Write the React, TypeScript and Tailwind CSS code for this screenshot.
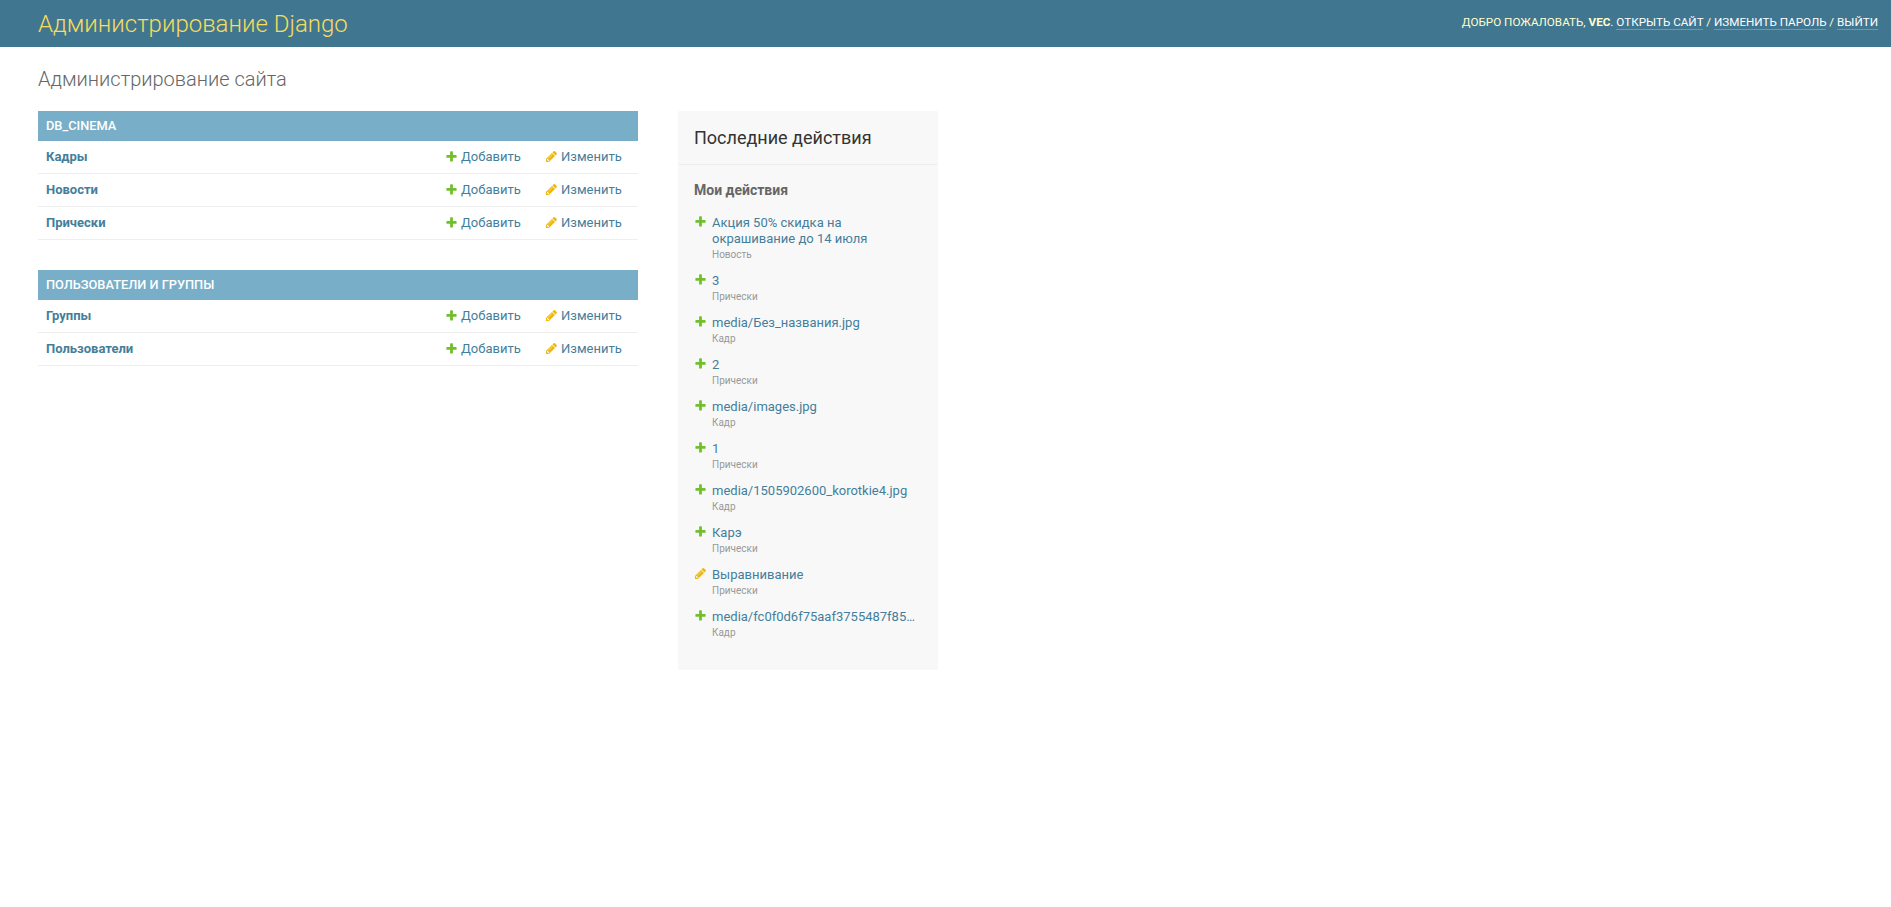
const models = [
  {
    caption: "DB_CINEMA",
    rows: ["Кадры", "Новости", "Прически"],
  },
  {
    caption: "ПОЛЬЗОВАТЕЛИ И ГРУППЫ",
    rows: ["Группы", "Пользователи"],
  },
];

const actions = [
  { title: "Акция 50% скидка на окрашивание до 14 июля", kind: "Новость", icon: "add" },
  { title: "3", kind: "Прически", icon: "add" },
  { title: "media/Без_названия.jpg", kind: "Кадр", icon: "add" },
  { title: "2", kind: "Прически", icon: "add" },
  { title: "media/images.jpg", kind: "Кадр", icon: "add" },
  { title: "1", kind: "Прически", icon: "add" },
  { title: "media/1505902600_korotkie4.jpg", kind: "Кадр", icon: "add" },
  { title: "Карэ", kind: "Прически", icon: "add" },
  { title: "Выравнивание", kind: "Прически", icon: "change" },
  { title: "media/fc0f0d6f75aaf3755487f85…", kind: "Кадр", icon: "add" },
];

function AddIcon() {
  return (
    <svg width="13" height="13" viewBox="0 0 1792 1792" className="shrink-0">
      <path
        fill="#70bf2b"
        d="M1600 796v192q0 40-28 68t-68 28h-416v416q0 40-28 68t-68 28h-192q-40 0-68-28t-28-68v-416h-416q-40 0-68-28t-28-68v-192q0-40 28-68t68-28h416v-416q0-40 28-68t68-28h192q40 0 68 28t28 68v416h416q40 0 68 28t28 68z"
      />
    </svg>
  );
}

function ChangeIcon() {
  return (
    <svg width="13" height="13" viewBox="0 0 1792 1792" className="shrink-0">
      <path
        fill="#efb80b"
        d="M491 1536l91-91-235-235-91 91v107h128v128h107zm523-928q0-22-22-22-10 0-17 7l-542 542q-7 7-7 17 0 22 22 22 10 0 17-7l542-542q7-7 7-17zm-54-192l416 416-832 832h-416v-416zm683 96q0 53-37 90l-166 166-416-416 166-165q36-38 90-38 53 0 91 38l235 234q37 39 37 91z"
      />
    </svg>
  );
}

function ModelTable({ caption, rows }: { caption: string; rows: string[] }) {
  return (
    <div className="mb-[30px]">
      <div className="h-[30px] bg-[#79aec8] px-2 flex items-center text-[12.8px] font-medium text-white">
        {caption}
      </div>
      {rows.map((name) => (
        <div key={name} className="h-[33px] flex items-center border-b border-[#eeeeee] pl-2 pr-4 text-[13px]">
          <span className="font-bold text-[#447e9b] flex-1">{name}</span>
          <span className="w-[100px] flex items-center gap-[3px] text-[#447e9b]">
            <span className="pb-[2px]">
              <AddIcon />
            </span>
            Добавить
          </span>
          <span className="w-[77px] flex items-center gap-[3px] text-[#447e9b]">
            <span className="pb-[2px]">
              <ChangeIcon />
            </span>
            Изменить
          </span>
        </div>
      ))}
    </div>
  );
}

export default function App() {
  return (
    <div className="min-h-[907px] bg-white font-['Roboto',sans-serif]">
      <header className="h-[47px] bg-[#417690] flex items-center justify-between pl-[38px] pr-[13px]">
        <h1 className="text-[24px] font-light text-[#f5dd5d]">Администрирование Django</h1>
        <div className="text-[11.66px] text-[#ffffcc] pb-[2px]">
          ДОБРО ПОЖАЛОВАТЬ, <strong className="font-bold">VEC</strong>.{" "}
          <a className="text-white border-b border-white/25">ОТКРЫТЬ САЙТ</a> /{" "}
          <a className="text-white border-b border-white/25">ИЗМЕНИТЬ ПАРОЛЬ</a> /{" "}
          <a className="text-white border-b border-white/25">ВЫЙТИ</a>
        </div>
      </header>

      <main className="px-[38px]">
        <h2 className="pt-[20px] pb-[20px] h-[64px] text-[20px] leading-[24px] font-light text-[#666666]">
          Администрирование сайта
        </h2>
        <div className="flex gap-[40px] items-start">
          <div className="w-[600px]">
            {models.map((m) => (
              <ModelTable key={m.caption} caption={m.caption} rows={m.rows} />
            ))}
          </div>
          <aside className="w-[260px] h-[559px] bg-[#f8f8f8]">
            <div className="h-[54px] border-b border-[#eeeeee] px-4 flex items-center text-[18px] text-[#333333]">
              Последние действия
            </div>
            <div className="px-4">
              <h3 className="pt-[16px] pb-[16px] text-[14px] leading-[18px] font-bold text-[#666666]">Мои действия</h3>
              <ul>
                {actions.map((a, i) => (
                  <li key={i} className="flex gap-[5px] mb-[11px]">
                    <span>{a.icon === "add" ? <AddIcon /> : <ChangeIcon />}</span>
                    <div className="min-w-0 flex-1">
                      <div className="text-[13px] leading-[16px] text-[#447e9b]">{a.title}</div>
                      <div className="text-[10px] leading-[14px] mt-[1px] text-[#999999]">{a.kind}</div>
                    </div>
                  </li>
                ))}
              </ul>
            </div>
          </aside>
        </div>
      </main>
    </div>
  );
}
